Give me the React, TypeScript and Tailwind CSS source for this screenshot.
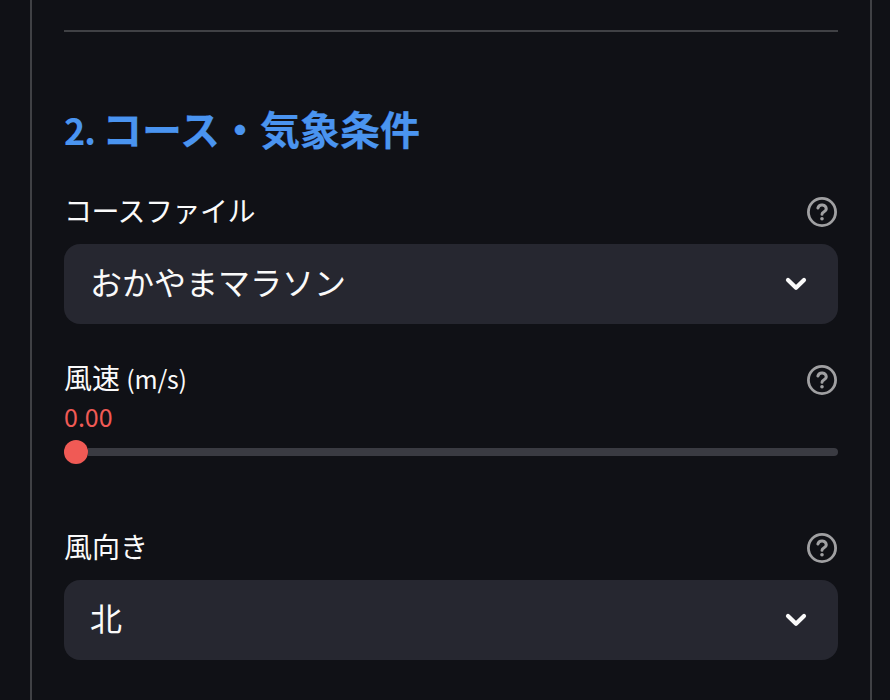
import type { ReactNode } from "react";

// ── Icons ──────────────────────────────────────────────────────────────────
function HelpIcon() {
    return (
        <svg
            className="h-8 w-8 text-[#a0a0a2]"
            viewBox="0 0 32 32"
            fill="none"
            stroke="currentColor"
            strokeWidth="2.8"
            strokeLinecap="round"
            strokeLinejoin="round"
        >
            <circle cx="16" cy="16" r="13.6" />
            <path d="M11.9 12a4.3 4.3 0 0 1 8.4 1c0 2.6-4.3 2.8-4.3 5.2" strokeWidth="3" />
            <circle cx="16" cy="22.7" r="1.8" fill="currentColor" stroke="none" />
        </svg>
    );
}

function ChevronIcon() {
    return (
        <svg
            className="h-8 w-8"
            viewBox="0 0 32 32"
            fill="none"
            stroke="currentColor"
            strokeWidth="4.2"
            strokeLinecap="round"
            strokeLinejoin="round"
        >
            <path d="M8 12l8 7.8 8-7.8" />
        </svg>
    );
}

function FieldLabel({ children }: { children: ReactNode }) {
    return (
        <div className="flex h-8 items-center justify-between">
            <span className="-mt-[5px] text-[28px] leading-8">{children}</span>
            <HelpIcon />
        </div>
    );
}

function SelectField({ label, value }: { label: ReactNode; value: string }) {
    return (
        <div>
            <FieldLabel>{label}</FieldLabel>
            <button className="mt-4 flex h-20 w-full items-center justify-between rounded-2xl bg-[#262730] px-[26px] text-[32px]">
                <span className="-mt-1.5">{value}</span>
                <ChevronIcon />
            </button>
        </div>
    );
}

export default function App() {
    return (
        <div className="h-[700px] overflow-hidden bg-[#101116] pr-[18px] pl-[30px] font-['Noto_Sans_CJK_JP',sans-serif] text-[#fafafa]">
            <section className="h-full border-x-2 border-[#404145] px-8 pt-[30px]">
                <hr className="border-t-2 border-[#404145]" />
                <h2 className="mt-[71px] h-[50px] text-[40px] leading-[50px] font-bold text-[#4a94f0]">
                    <span className="text-[36px] tracking-[-1px]">2. </span>
                    <span className="[-webkit-text-stroke:0.2px]">コース・気象条件</span>
                </h2>

                <div className="mt-[43px]">
                    <SelectField label={<span className="tracking-[-0.5px]">コースファイル</span>} value="おかやまマラソン" />
                </div>

                {/* Wind speed slider, thumb at the minimum */}
                <div className="mt-10">
                    <FieldLabel>
                        風速 <span className="text-[25px] tracking-[-0.2px]">(m/s)</span>
                    </FieldLabel>
                    <div className="mt-1 h-8 text-[25px] leading-8 text-[#f05a55]">0.00</div>
                    <div className="mt-2 flex h-6 items-center">
                        <span className="h-6 w-6 rounded-full bg-[#f05a55]" />
                        <span className="h-2 flex-1 rounded-r-full bg-[#3a3b42]" />
                    </div>
                </div>

                <div className="mt-[68px]">
                    <SelectField label="風向き" value="北" />
                </div>
            </section>
        </div>
    );
}
